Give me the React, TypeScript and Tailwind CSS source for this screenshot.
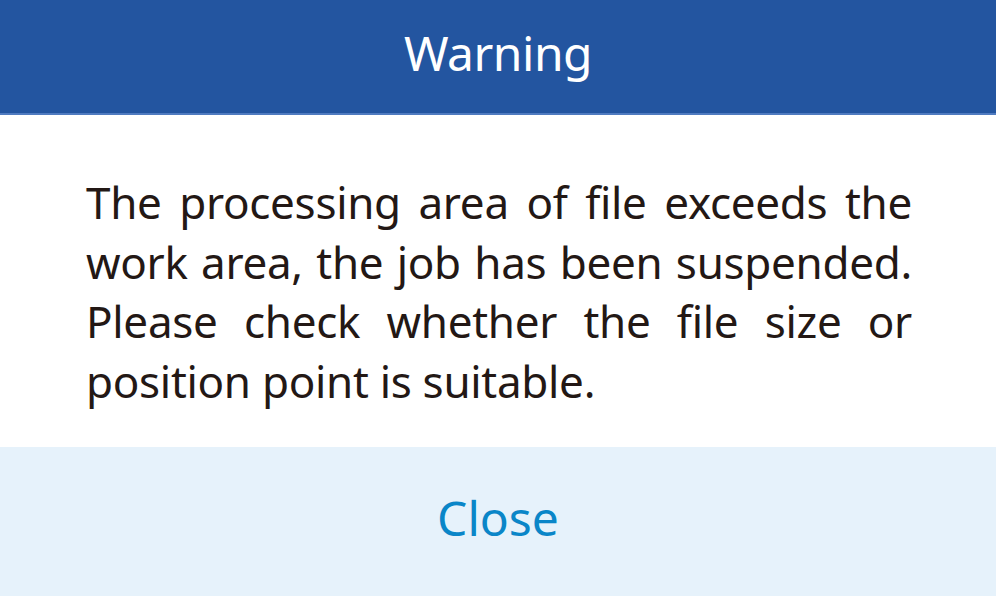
const lines = [
  "The processing area of file exceeds the",
  "work area, the job has been suspended.",
  "Please check whether the file size or",
];

const App = () => {
  return (
    <div className="w-[996px] h-[596px] flex flex-col bg-white font-['Noto_Sans',sans-serif] overflow-hidden">
      <div className="h-[115px] shrink-0 flex items-center justify-center bg-[#2355a0] border-b-2 border-[#4f7bc0]">
        <span className="text-white text-[48px] leading-none pb-2 tracking-[-0.5px]">Warning</span>
      </div>

      <div className="h-[332px] shrink-0 pl-[86px] pr-[84px] pt-[58px]">
        <div className="text-[#231815] text-[44px] leading-[59.5px] tracking-[-0.3px]">
          {lines.map((l) => (
            <p key={l} className="text-justify [text-align-last:justify] whitespace-nowrap">
              {l}
            </p>
          ))}
          <p>position point is suitable.</p>
        </div>
      </div>

      <div className="flex-1 flex items-center justify-center bg-[#e6f2fb]">
        <button className="text-[#0a86c8] text-[48px] leading-none pb-2">Close</button>
      </div>
    </div>
  );
};

export default App;
